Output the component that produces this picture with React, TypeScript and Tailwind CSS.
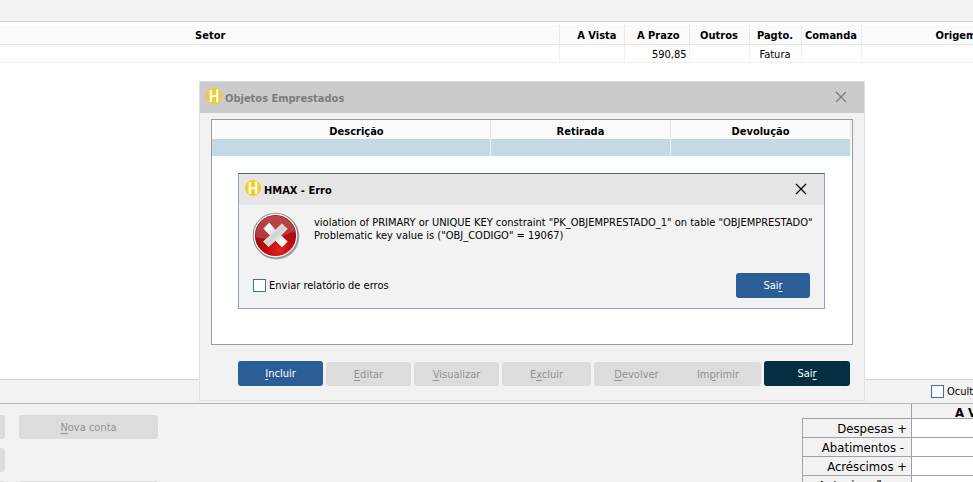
import type { ReactNode } from 'react'

type ActionButtonProps = {
  before?: string
  hotkey: string
  after?: string
  className?: string
  disabled?: boolean
}

const dialogActions = [
  { hotkey: 'I', after: 'ncluir', className: 'h-[25px] w-[85px] bg-[#2b5d97] text-white' },
  { hotkey: 'E', after: 'ditar', className: 'ml-[3px] h-6 w-[85px]', disabled: true },
  { hotkey: 'V', after: 'isualizar', className: 'ml-[3px] h-6 w-[85px]', disabled: true },
  { before: 'E', hotkey: 'x', after: 'cluir', className: 'ml-[3px] h-6 w-[89px]', disabled: true },
  { hotkey: 'D', after: 'evolver', className: 'ml-[3px] h-6 w-[85px] rounded-r-none', disabled: true },
  { before: 'Im', hotkey: 'p', after: 'rimir', className: 'h-6 w-[82px] rounded-l-none pr-1', disabled: true },
  { before: 'Sai', hotkey: 'r', className: 'ml-[3px] h-[25px] w-[86px] bg-[#032f40] text-white' },
]

const totals = ['Despesas +', 'Abatimentos -', 'Acréscimos +', 'Antecipações -']

export default function App() {
  return (
    <div className="relative flex h-screen flex-col overflow-hidden bg-white font-['DejaVu_Sans_Condensed','DejaVu_Sans',sans-serif] text-[11px] leading-[13px] text-black">
      <div className="h-[22px] shrink-0 border-b border-[#d4d4d4] bg-[#f2f2f2]" />
      <main className="flex-1 overflow-hidden pt-[3px]">
        <AccountsTable />
      </main>
      <Footer />
      <LoansDialog />
    </div>
  )
}

const AccountsTable = () => {
  return (
    <table className="w-full table-fixed border-collapse whitespace-nowrap">
      <colgroup>
        <col />
        <col className="w-[65px]" />
        <col className="w-[65px]" />
        <col className="w-[60px]" />
        <col className="w-[52px]" />
        <col className="w-[60px]" />
        <col className="w-[112px]" />
      </colgroup>
      <thead>
        <tr className="h-[19px] border-b border-[#e2e2e2] bg-[#fafafa] [&>th]:border-r [&>th]:border-[#e8e8e8] [&>th]:pt-[3px] [&>th:last-child]:border-r-0">
          <th className="pr-[138px]">Setor</th>
          <th className="pr-[7px] text-right">A Vista</th>
          <th className="pr-[9px] text-right">A Prazo</th>
          <th>Outros</th>
          <th>Pagto.</th>
          <th>Comanda</th>
          <th className="pl-[74px] text-left">Origem</th>
        </tr>
      </thead>
      <tbody>
        <tr className="h-[18px] border-b border-[#efefef] [&>td]:border-r [&>td]:border-[#efefef] [&>td]:pt-[3px] [&>td:last-child]:border-r-0">
          <td />
          <td />
          <td className="pr-0.5 text-right">590,85</td>
          <td />
          <td className="text-center">Fatura</td>
          <td />
          <td />
        </tr>
      </tbody>
    </table>
  )
}

const Footer = () => {
  return (
    <footer className="h-[103px] shrink-0 overflow-hidden border-t border-[#d4d4d4] bg-[#f2f2f2]">
      <div className="flex h-6 items-center justify-end overflow-hidden border-b border-[#b4b4b4]">
        <div className="w-[42px]">
          <Checkbox id="ocultar" className="gap-[3px]">
            Ocultar
          </Checkbox>
        </div>
      </div>
      <div className="flex items-start justify-between">
        <div className="grid grid-cols-[5px_139px] gap-x-[14px] gap-y-[9px] pt-[11px]">
          <SideStub />
          <ActionButton hotkey="N" after="ova conta" className="h-6" disabled />
          <SideStub />
          <div />
          <SideStub />
          <div className="h-6 rounded-[3px] bg-[#dcdcdc]" />
        </div>
        <TotalsTable />
      </div>
    </footer>
  )
}

const SideStub = () => <div className="h-6 rounded-r-[3px] bg-[#dcdcdc]" />

const TotalsTable = () => {
  return (
    <table className="w-[171px] table-fixed border-collapse text-[13px] leading-[15px] whitespace-nowrap">
      <colgroup>
        <col className="w-[109px]" />
        <col />
      </colgroup>
      <thead>
        <tr className="h-[14px]">
          <td className="p-0" />
          <th className="border-l border-[#a0a0a0] p-0">
            <div className="h-[14px] overflow-hidden pt-px pl-[43px] text-left">A Vista</div>
          </th>
        </tr>
      </thead>
      <tbody>
        {totals.map((label) => (
          <tr key={label} className="h-[19px]">
            <th
              className={`border border-[#a0a0a0] p-0 pt-px text-right font-normal ${label.endsWith('-') ? 'pr-[7px]' : 'pr-1'}`}
            >
              {label}
            </th>
            <td className="border border-r-0 border-[#a0a0a0] bg-white" />
          </tr>
        ))}
      </tbody>
    </table>
  )
}

const LoansDialog = () => {
  return (
    <section
      role="dialog"
      aria-label="Objetos Emprestados"
      className="absolute top-[81px] left-[199px] w-[666px] border border-[#dfe1e3] bg-[#f2f2f2]"
    >
      <TitleBar title="Objetos Emprestados" className="bg-[#cbcbcb] pr-[17px] text-[#7c7c7c]" />
      <div className="mx-[11px] mt-[6px] h-[226px] border border-[#999] bg-white pr-px">
        <table className="w-full table-fixed border-collapse">
          <colgroup>
            <col />
            <col className="w-[180px]" />
            <col className="w-[180px]" />
          </colgroup>
          <thead>
            <tr className="h-[19px] bg-[#fafafa] [&>th]:border-r [&>th]:border-[#e8e8e8] [&>th]:pt-[3px]">
              <th className="pl-[11px]">Descrição</th>
              <th>Retirada</th>
              <th>Devolução</th>
            </tr>
          </thead>
          <tbody>
            <tr className="h-[17px] bg-[#c5d8e6] [&>td]:border-r [&>td]:border-[#eef2f5]">
              <td />
              <td />
              <td />
            </tr>
          </tbody>
        </table>
      </div>
      <div className="flex items-end pt-4 pb-[14px] pl-[38px]">
        {dialogActions.map((action) => (
          <ActionButton key={(action.before ?? '') + action.hotkey} {...action} />
        ))}
      </div>
      <ErrorDialog />
    </section>
  )
}

const ErrorDialog = () => {
  return (
    <section
      role="alertdialog"
      aria-label="HMAX - Erro"
      className="absolute top-[91px] left-[38px] w-[587px] border border-[#8ba3c4] border-t-[#4c6a94] bg-[#f2f2f2]"
    >
      <TitleBar title="HMAX - Erro" className="bg-[#e5e5e5] pr-[17px] text-black" />
      <div className="flex pt-[7px] pl-[13px]">
        <ErrorIcon />
        <p className="pt-[4px] pl-[14px] whitespace-nowrap">
          violation of PRIMARY or UNIQUE KEY constraint "PK_OBJEMPRESTADO_1" on table "OBJEMPRESTADO"
          <br />
          Problematic key value is ("OBJ_CODIGO" = 19067)
        </p>
      </div>
      <div className="flex items-center justify-between pt-[13px] pr-[14px] pb-[10px] pl-[14px]">
        <Checkbox id="enviar" className="gap-[3px]">
          Enviar relatório de erros
        </Checkbox>
        <ActionButton before="Sai" hotkey="r" className="h-[25px] w-[74px] bg-[#2b5d97] text-white" />
      </div>
    </section>
  )
}

const TitleBar = ({ title, className }: { title: string; className: string }) => {
  return (
    <header className={`flex h-[31px] items-center pl-[6px] ${className}`}>
      <Logo />
      <h2 className="pt-[2px] pl-[3px] font-bold">{title}</h2>
      <button type="button" aria-label="Fechar" className="mb-px ml-auto">
        <svg width="12" height="12" viewBox="0 0 12 12" fill="none" stroke="currentColor" strokeWidth="1.2">
          <path d="M1 1L11 11M11 1L1 11" />
        </svg>
      </button>
    </header>
  )
}

const ActionButton = ({ before, hotkey, after, className = '', disabled }: ActionButtonProps) => {
  return (
    <button
      type="button"
      disabled={disabled}
      className={`shrink-0 rounded-[3px] disabled:bg-[#dcdcdc] disabled:text-[#929292] ${className}`}
    >
      {before}
      <span className="underline underline-offset-2">{hotkey}</span>
      {after}
    </button>
  )
}

const Checkbox = ({ id, className, children }: { id: string; className: string; children: ReactNode }) => {
  return (
    <div className={`flex items-center whitespace-nowrap ${className}`}>
      <input
        id={id}
        type="checkbox"
        className="size-[13px] shrink-0 appearance-none border border-solid border-[#3a6eae] bg-white"
      />
      <label htmlFor={id}>{children}</label>
    </div>
  )
}

const Logo = () => {
  return (
    <svg width="16" height="16" viewBox="0 0 16 16" aria-hidden="true" className="mb-[3px]">
      <circle cx="8" cy="8" r="8" fill="#f0cf22" />
      <path d="M4.8 2V14M11.2 1.5V14" stroke="#fff" strokeWidth="2.2" />
      <path d="M4.5 9.2L11.5 7.2" stroke="#fff" strokeWidth="1.8" />
    </svg>
  )
}

const ErrorIcon = () => {
  return (
    <svg width="48" height="48" viewBox="0 0 48 48" aria-hidden="true">
      <defs>
        <radialGradient id="ball" cx="0.6" cy="0.85" r="0.7">
          <stop offset="0" stopColor="#e0261c" />
          <stop offset="0.5" stopColor="#b90b10" />
          <stop offset="1" stopColor="#8e1014" />
        </radialGradient>
        <linearGradient id="gloss" x1="0" y1="0" x2="0" y2="1">
          <stop offset="0" stopColor="#c85a5c" />
          <stop offset="1" stopColor="#bc4446" />
        </linearGradient>
        <linearGradient id="cross" x1="0" y1="0" x2="1" y2="1">
          <stop offset="0.2" stopColor="#fff" />
          <stop offset="0.5" stopColor="#cfcfcf" />
          <stop offset="0.8" stopColor="#fff" />
        </linearGradient>
      </defs>
      <circle cx="24.3" cy="24.6" r="23" fill="#a6a6a6" />
      <circle cx="23.5" cy="23.5" r="22.8" fill="#858585" />
      <circle cx="23.5" cy="23.5" r="21.9" fill="#f1f1f1" />
      <circle cx="23.5" cy="23.5" r="20.6" fill="url(#ball)" />
      <path d="M3.4 25A20.2 20.2 0 0 1 43.4 20C36 20 33 25 23 26C14 27 8 27 3.4 25Z" fill="url(#gloss)" opacity="0.75" />
      <path
        d="M17.2 11.2L23.4 18.2L30 11.8L35.2 17L28.6 23.2L35 29.6L30 34.8L23.4 28.4L16.4 34.6L11.6 29.6L18.4 23.4L12 16.6Z"
        fill="url(#cross)"
        stroke="url(#cross)"
        strokeLinejoin="round"
      />
    </svg>
  )
}
